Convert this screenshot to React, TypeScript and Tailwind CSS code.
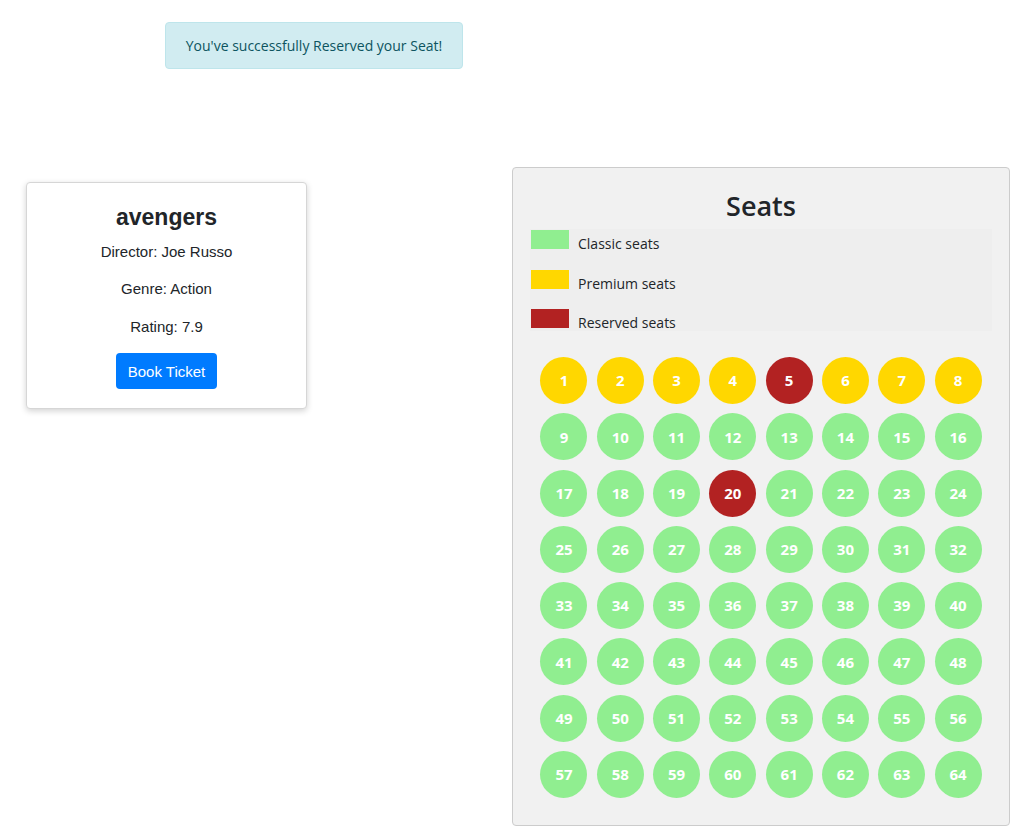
import React from "react";

const reserved = [5, 20];

function seatColor(n: number) {
  if (reserved.includes(n)) return "bg-[#b22222]";
  if (n <= 8) return "bg-[#ffd700]";
  return "bg-[#90ee90]";
}

const legend = [
  { label: "Classic seats", color: "bg-[#90ee90]" },
  { label: "Premium seats", color: "bg-[#ffd700]" },
  { label: "Reserved seats", color: "bg-[#b22222]" },
];

/* ── MovieCard ─────────────────────────────────────────────── */
function MovieCard() {
  return (
    <div className="w-[281px] mt-[15px] bg-white rounded-[4px] border border-[#d6d6d6] shadow-[0_2px_6px_rgba(0,0,0,0.18)] flex flex-col items-center pt-[20px] pb-[19px] font-['Liberation_Sans',Arial,sans-serif] text-[#212529]">
      <h2 className="text-[23px] font-bold leading-[28px]">avengers</h2>
      <p className="text-[15px] leading-[20px] mt-[11px]">Director: Joe Russo</p>
      <p className="text-[15px] leading-[20px] mt-[17px]">Genre: Action</p>
      <p className="text-[15px] leading-[20px] mt-[18px]">Rating: 7.9</p>
      <button className="mt-[16px] h-[36px] px-[12px] rounded-[4px] bg-[#007bff] text-white text-[15px] leading-none">
        Book Ticket
      </button>
    </div>
  );
}

/* ── SeatMap ─────────────────────────────────────────────── */
function SeatMap() {
  const seats = Array.from({ length: 64 }, (_, i) => i + 1);
  return (
    <div className="ml-[205px] w-[498px] h-[659px] bg-[#f1f1f1] border border-[#cccccc] rounded-[4px] px-[17px] font-['Open_Sans',sans-serif] text-[#212529]">
      <h2 className="text-center text-[27px] font-semibold leading-[36px] mt-[20px]">Seats</h2>
      <div className="mt-[5px] h-[102px] bg-[#eeeeee] pt-[1px] flex flex-col gap-[20.5px]">
        {legend.map((l) => (
          <div key={l.label} className="flex items-start h-[19px]">
            <span className={`w-[38px] h-[19px] ml-[1px] ${l.color}`} />
            <span className="ml-[9px] mt-[4px] text-[14px] leading-[19px]">{l.label}</span>
          </div>
        ))}
      </div>
      <div className="mt-[26px] grid grid-cols-8 gap-[9.3px] w-fit mx-auto">
        {seats.map((n) => (
          <div
            key={n}
            className={`w-[47px] h-[47px] rounded-full flex items-center justify-center text-white font-bold text-[15px] ${seatColor(n)}`}
          >
            {n}
          </div>
        ))}
      </div>
    </div>
  );
}

export default function App() {
  return (
    <div className="w-[1035px] min-h-[837px] bg-white pt-[22px]">
      <div className="ml-[165px] w-[298px] h-[47px] bg-[#d1ecf1] border border-[#bee5eb] rounded-[4px] flex items-center justify-center font-['Open_Sans',sans-serif] text-[14px] text-[#0c5460]">
        You've successfully Reserved your Seat!
      </div>
      <div className="flex items-start mt-[98px] pl-[26px]">
        <MovieCard />
        <SeatMap />
      </div>
    </div>
  );
}
